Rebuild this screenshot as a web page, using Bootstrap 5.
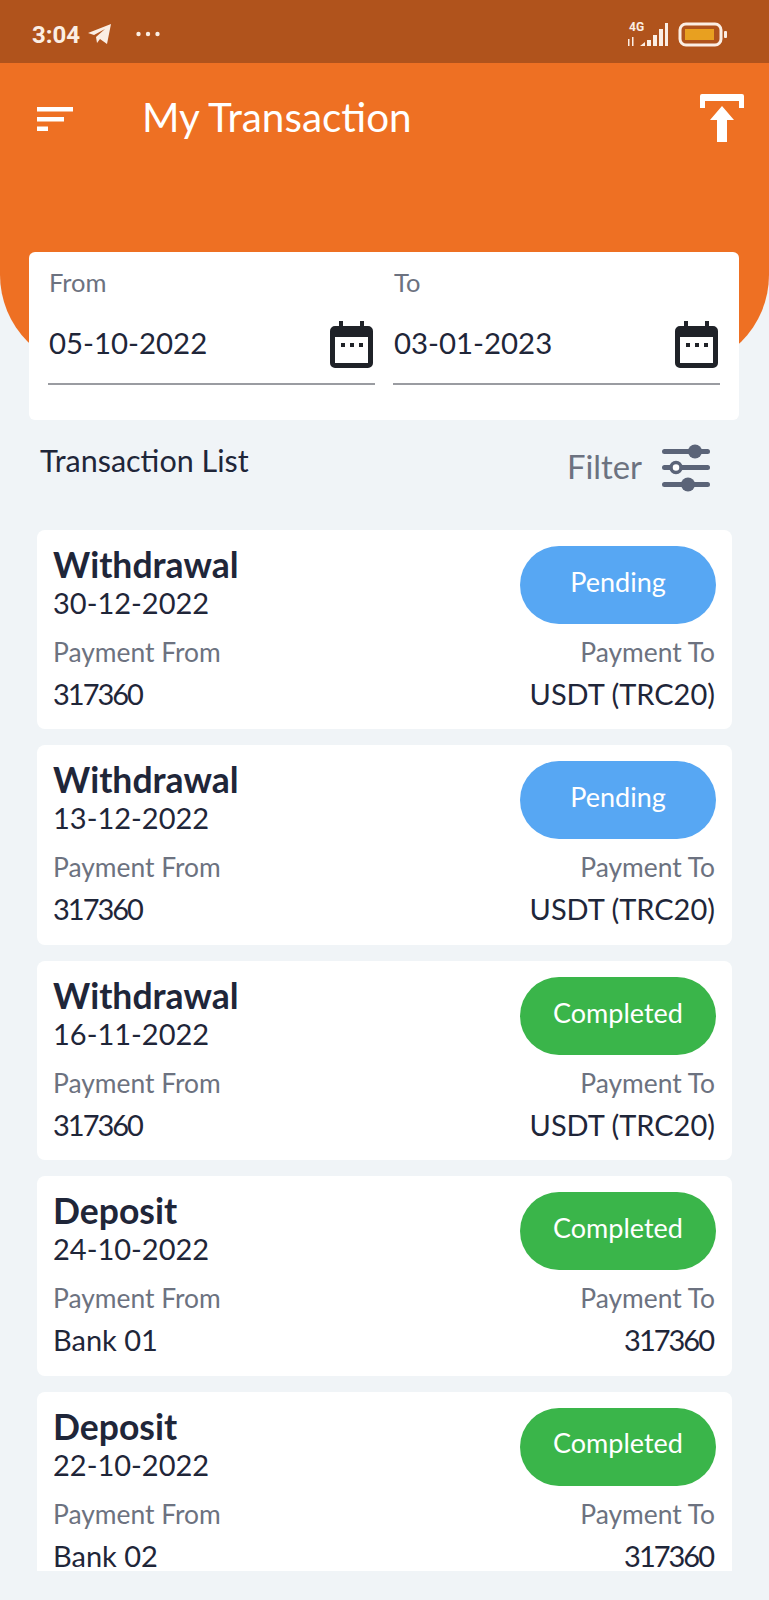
<!DOCTYPE html>
<html lang="en">

<head>
  <meta charset="UTF-8" />
  <meta name="viewport" content="width=device-width, initial-scale=1.0" />
  <title>My Transaction</title>
  <link href="https://cdn.jsdelivr.net/npm/bootstrap@5.3.0/dist/css/bootstrap.min.css" rel="stylesheet" />
  <style>
    body {
      background-color: #f0f4f7;
      font-family: "Lato", "Open Sans", sans-serif;
      color: #1f2639;
      width: 769px;
      height: 1600px;
      overflow: hidden;
    }

    .status-strip {
      height: 63px;
      background-color: #b0531c;
      color: #fbeee4;
      padding: 4px 42px 0 32px;
    }

    .status-time {
      font-family: "Roboto", sans-serif;
      font-weight: 700;
      font-size: 24px;
      line-height: 1;
      margin-top: 2px;
    }

    .top-panel {
      height: 306px;
      background-color: #ee7023;
      border-radius: 0 0 94px 94px;
      padding: 27px 25px 0 37px;
      color: #fff;
    }

    .top-title {
      font-size: 40.400px;
      line-height: 50px;
      margin: 2px 0 0 69px;
      font-weight: 400;
    }

    .menu-icon {
      margin-top: 17px;
    }

    .upload-icon {
      margin-top: 4px;
    }

    .range-box {
      margin: -117px 30px 0 29px;
      height: 168px;
      background: #fff;
      border-radius: 6px;
      padding: 14px 19px 0;
      gap: 18px;
      position: relative;
    }

    .range-field {
      width: 327px;
      height: 119px;
      border-bottom: 2px solid #9a9ca1;
    }

    .range-label {
      font-size: 25.500px;
      line-height: 32px;
      color: #6c7280;
      padding-left: 1px;
    }

    .range-date {
      font-size: 29.400px;
      line-height: 40px;
      margin-top: 25px;
      padding-left: 1px;
    }

    .cal-icon {
      margin: 23px 2px 0 0;
    }

    .list-head {
      height: 110px;
      padding: 21px 59px 0 40px;
    }

    .list-title {
      font-size: 30.500px;
      line-height: 38px;
    }

    .filter-text {
      font-size: 32.800px;
      line-height: 40px;
      color: #6c7280;
      margin-top: 6px;
    }

    .filter-icon {
      margin-top: 3px;
    }

    .tx-list {
      height: 1041px;
      margin: 0 37px;
      overflow: hidden;
      gap: 16px;
    }

    .tx-card {
      flex: 0 0 199.400px;
      border: 0;
      border-radius: 8px;
      padding: 16px 16px 0 16px;
    }

    .tx-name {
      font-size: 35.500px;
      line-height: 38px;
      font-weight: 700;
    }

    .tx-date {
      font-size: 29px;
      line-height: 38px;
    }

    .tx-pill {
      width: 196px;
      height: 78px;
      border-radius: 39px;
      color: #fff;
      font-size: 27px;
      padding-bottom: 6px;
    }

    .pill-wait {
      background-color: #57a7f3;
    }

    .pill-done {
      background-color: #3ab54a;
    }

    .tx-meta {
      margin-top: 12px;
      padding-right: 1px;
    }

    .tx-muted {
      font-size: 26.400px;
      line-height: 32px;
      color: #6c7280;
    }

    .tx-value {
      font-size: 29px;
      line-height: 40px;
      margin-top: 6px;
    }

    .tx-digits {
      letter-spacing: -2px;
      padding-right: 2px;
    }
  </style>
</head>

<body>
  <div class="status-strip d-flex align-items-center justify-content-between">
    <div class="d-flex align-items-center">
      <span class="status-time">3:04</span>
      <svg class="ms-2" width="24" height="22" viewBox="0 0 24 22" fill="#fbeee4">
        <path d="M0 10 23 1 19 21 12 16 9 20 8 14 17 6 6 12z" />
      </svg>
      <svg class="ms-4" width="24" height="6" viewBox="0 0 24 6" fill="#fbeee4">
        <circle cx="2.500" cy="3" r="2.200" />
        <circle cx="12" cy="3" r="2.200" />
        <circle cx="21.500" cy="3" r="2.200" />
      </svg>
    </div>
    <svg width="100" height="26" viewBox="0 0 100 26" fill="#fbeee4">
      <text x="2" y="10" font-family="Roboto, sans-serif" font-weight="700" font-size="12">4G</text>
      <path d="M1 18h1.500v7H1zM5 16h1.500v9H5z" />
      <path d="M13 25l5-4v4zM20 19h4v6h-4zM26 14h4v11h-4zM32 8h4v17h-4zM38 2h3v23h-3z" />
      <rect x="53" y="3" width="41" height="21" rx="6" fill="none" stroke="#fbeee4" stroke-width="3" />
      <rect x="58" y="8" width="29" height="11" fill="#e8a020" />
      <rect x="97" y="10" width="3" height="7" rx="1" />
    </svg>
  </div>

  <header class="top-panel d-flex align-items-start justify-content-between">
    <div class="d-flex align-items-start">
      <svg class="menu-icon" width="36" height="24" viewBox="0 0 36 24" fill="#fff">
        <rect x="0" y="0" width="36" height="4.500" />
        <rect x="0" y="10" width="27" height="4.500" />
        <rect x="0" y="19.500" width="11" height="4.500" />
      </svg>
      <h1 class="top-title">My Transaction</h1>
    </div>
    <svg class="upload-icon" width="44" height="48" viewBox="0 0 44 48" fill="#fff">
      <path d="M2 0h40a2 2 0 0 1 2 2v12h-5V7H5v7H0V2a2 2 0 0 1 2-2z" />
      <path d="M22 12 34 26H27V48H17V26H10z" />
    </svg>
  </header>

  <section class="range-box d-flex">
    <div class="range-field">
      <div class="range-label">From</div>
      <div class="d-flex justify-content-between align-items-start">
        <div class="range-date">05-10-2022</div>
        <svg class="cal-icon" width="43" height="47" viewBox="0 0 43 47">
          <path fill="#1f2228" d="M9 0h4v5h17V0h4v5h4a5 5 0 0 1 5 5v32a5 5 0 0 1-5 5H5a5 5 0 0 1-5-5V10a5 5 0 0 1 5-5h4z" />
          <rect x="5" y="16" width="33" height="26" fill="#fff" />
          <rect x="11" y="22" width="4" height="4" fill="#1f2228" />
          <rect x="20" y="22" width="4" height="4" fill="#1f2228" />
          <rect x="29" y="22" width="4" height="4" fill="#1f2228" />
        </svg>
      </div>
    </div>
    <div class="range-field">
      <div class="range-label">To</div>
      <div class="d-flex justify-content-between align-items-start">
        <div class="range-date">03-01-2023</div>
        <svg class="cal-icon" width="43" height="47" viewBox="0 0 43 47">
          <path fill="#1f2228" d="M9 0h4v5h17V0h4v5h4a5 5 0 0 1 5 5v32a5 5 0 0 1-5 5H5a5 5 0 0 1-5-5V10a5 5 0 0 1 5-5h4z" />
          <rect x="5" y="16" width="33" height="26" fill="#fff" />
          <rect x="11" y="22" width="4" height="4" fill="#1f2228" />
          <rect x="20" y="22" width="4" height="4" fill="#1f2228" />
          <rect x="29" y="22" width="4" height="4" fill="#1f2228" />
        </svg>
      </div>
    </div>
  </section>

  <div class="list-head d-flex justify-content-between align-items-start">
    <div class="list-title">Transaction List</div>
    <div class="d-flex align-items-start gap-3">
      <div class="filter-text">Filter</div>
      <svg class="filter-icon ms-1" width="48" height="48" viewBox="0 0 48 48" fill="#5b6478">
        <rect x="0" y="5" width="48" height="5" rx="2.500" />
        <circle cx="33" cy="7.500" r="7" />
        <rect x="0" y="21" width="48" height="5" rx="2.500" />
        <circle cx="14" cy="23.500" r="5" fill="#fff" stroke="#5b6478" stroke-width="3.500" />
        <rect x="0" y="38" width="48" height="5" rx="2.500" />
        <circle cx="26" cy="40.500" r="7" />
      </svg>
    </div>
  </div>

  <main class="tx-list d-flex flex-column" id="tx-list"></main>

  <script src="https://cdn.jsdelivr.net/npm/bootstrap@5.3.0/dist/js/bootstrap.bundle.min.js"></script>
  <script>
    const transactions = [
      { type: 'Withdrawal', date: '30-12-2022', status: 'Pending', from: '317360', to: 'USDT (TRC20)' },
      { type: 'Withdrawal', date: '13-12-2022', status: 'Pending', from: '317360', to: 'USDT (TRC20)' },
      { type: 'Withdrawal', date: '16-11-2022', status: 'Completed', from: '317360', to: 'USDT (TRC20)' },
      { type: 'Deposit', date: '24-10-2022', status: 'Completed', from: 'Bank 01', to: '317360' },
      { type: 'Deposit', date: '22-10-2022', status: 'Completed', from: 'Bank 02', to: '317360' }
    ];

    function valueClass(text) {
      return /^\d+$/.test(text) ? 'tx-value tx-digits' : 'tx-value';
    }

    document.getElementById('tx-list').innerHTML = transactions.map(tx => `
      <div class="card tx-card">
        <div class="d-flex justify-content-between align-items-start">
          <div>
            <div class="tx-name">${tx.type}</div>
            <div class="tx-date">${tx.date}</div>
          </div>
          <div class="tx-pill d-flex align-items-center justify-content-center ${tx.status === 'Pending' ? 'pill-wait' : 'pill-done'}">${tx.status}</div>
        </div>
        <div class="tx-meta d-flex justify-content-between">
          <div>
            <div class="tx-muted">Payment From</div>
            <div class="${valueClass(tx.from)}">${tx.from}</div>
          </div>
          <div class="text-end">
            <div class="tx-muted">Payment To</div>
            <div class="${valueClass(tx.to)}">${tx.to}</div>
          </div>
        </div>
      </div>
    `).join('');
  </script>
</body>

</html>
